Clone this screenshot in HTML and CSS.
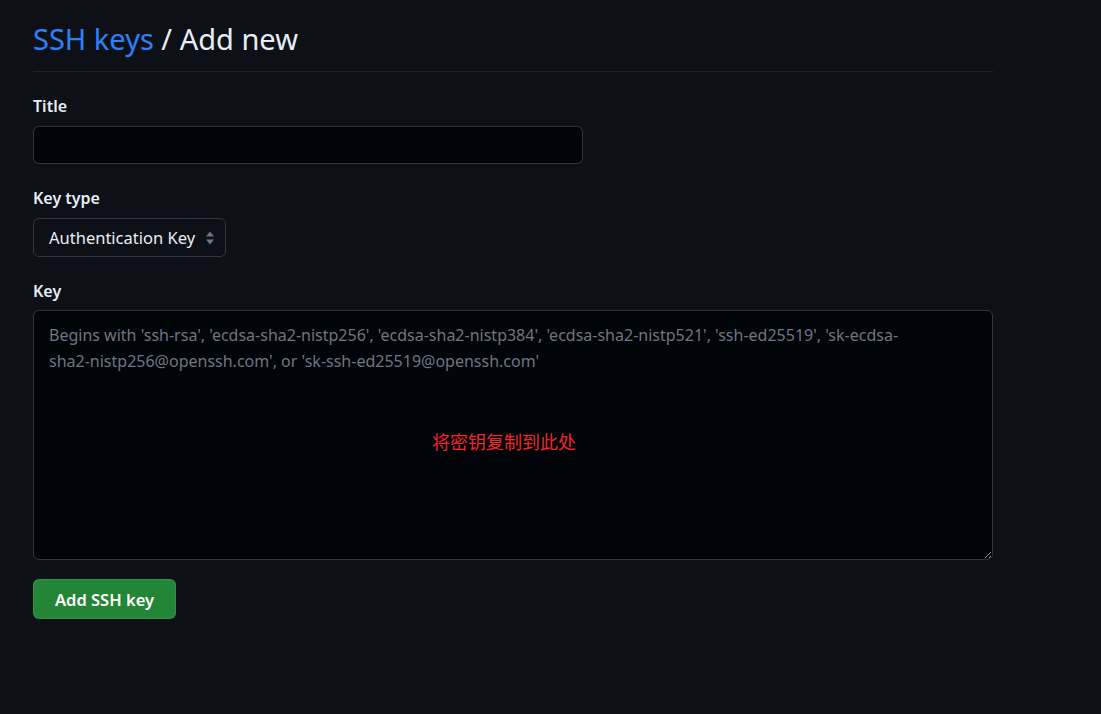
FILE: index.html
```html
<!DOCTYPE html>
<html lang="en">
<head>
<meta charset="utf-8">
<title>Add new SSH key</title>
<link rel="stylesheet" href="styles.css">
</head>
<body>
<main class="page">
  <div class="subhead">
    <h2 class="subhead-heading"><a class="crumb" href="#">SSH keys</a> / Add new</h2>
  </div>
  <form class="form">
    <div class="form-group gap-10">
      <label class="label" for="title">Title</label>
      <input class="input input-title" id="title" type="text">
    </div>
    <div class="form-group gap-10">
      <label class="label">Key type</label>
      <div class="select">
        <span class="select-text">Authentication Key</span>
        <svg class="select-arrow" width="10" height="16" viewBox="0 0 10 16" aria-hidden="true">
          <path d="M5 1.5 L9 6.5 H1 Z" fill="#6e7681"/>
          <path d="M5 14.5 L9 9.5 H1 Z" fill="#6e7681"/>
        </svg>
      </div>
    </div>
    <div class="form-group gap-9">
      <label class="label" for="key">Key</label>
      <div class="key-wrap">
        <textarea class="input textarea" id="key" placeholder="Begins with 'ssh-rsa', 'ecdsa-sha2-nistp256', 'ecdsa-sha2-nistp384', 'ecdsa-sha2-nistp521', 'ssh-ed25519', 'sk-ecdsa-sha2-nistp256@openssh.com', or 'sk-ssh-ed25519@openssh.com'"></textarea>
        <span class="annotation">将密钥复制到此处</span>
      </div>
    </div>
    <button class="btn-primary" type="button">Add SSH key</button>
  </form>
</main>
</body>
</html>
```

FILE: styles.css
```css
html, body {
  margin: 0;
  padding: 0;
  background: #0d1117;
  color: #e6edf3;
  font-family: "Noto Sans", "Noto Sans CJK SC", sans-serif;
  color-scheme: dark;
}

.page {
  width: 960px;
  padding: 21px 0 0 33px;
}

.subhead {
  border-bottom: 1px solid #21262d;
  padding-bottom: 14px;
}

.subhead-heading {
  margin: 0;
  font-size: 29px;
  font-weight: 400;
  line-height: 36px;
  color: #e6edf3;
}

.crumb {
  color: #2f81f7;
  text-decoration: none;
}

.form {
  display: flex;
  flex-direction: column;
  padding-top: 24px;
}

.form-group {
  display: flex;
  flex-direction: column;
  align-items: flex-start;
  margin-bottom: 24px;
}

.gap-10 { gap: 10px; }
.gap-9 { gap: 9px; }

.label {
  font-size: 16px;
  font-weight: 600;
  line-height: 20px;
  color: #e6edf3;
}

.input {
  box-sizing: border-box;
  background: #010409;
  border: 1px solid #30363d;
  border-radius: 6px;
  color: #e6edf3;
  font-family: inherit;
  outline: none;
}

.input-title {
  width: 550px;
  height: 38px;
}

.select {
  box-sizing: border-box;
  height: 39px;
  width: 193px;
  display: flex;
  align-items: center;
  justify-content: space-between;
  padding: 0 10px 0 15px;
  border: 1px solid #30363d;
  border-radius: 6px;
  background: #0d1117;
  font-size: 16.5px;
  color: #e6edf3;
}

.select-arrow {
  display: block;
}

.key-wrap {
  position: relative;
  display: flex;
}

.textarea {
  width: 960px;
  height: 250px;
  padding: 11px 60px 12px 15px;
  font-size: 16px;
  line-height: 26px;
  resize: vertical;
}

.textarea::placeholder {
  color: #6e7681;
}

.annotation {
  position: absolute;
  left: 399px;
  top: 120px;
  font-size: 18px;
  line-height: 24px;
  color: #f0262a;
}

.btn-primary {
  align-self: flex-start;
  margin-top: -5px;
  height: 40px;
  width: 143px;
  border: 1px solid rgba(240, 246, 252, 0.1);
  border-radius: 6px;
  background: #238636;
  color: #ffffff;
  font-family: inherit;
  font-size: 16.5px;
  font-weight: 600;
}
```
